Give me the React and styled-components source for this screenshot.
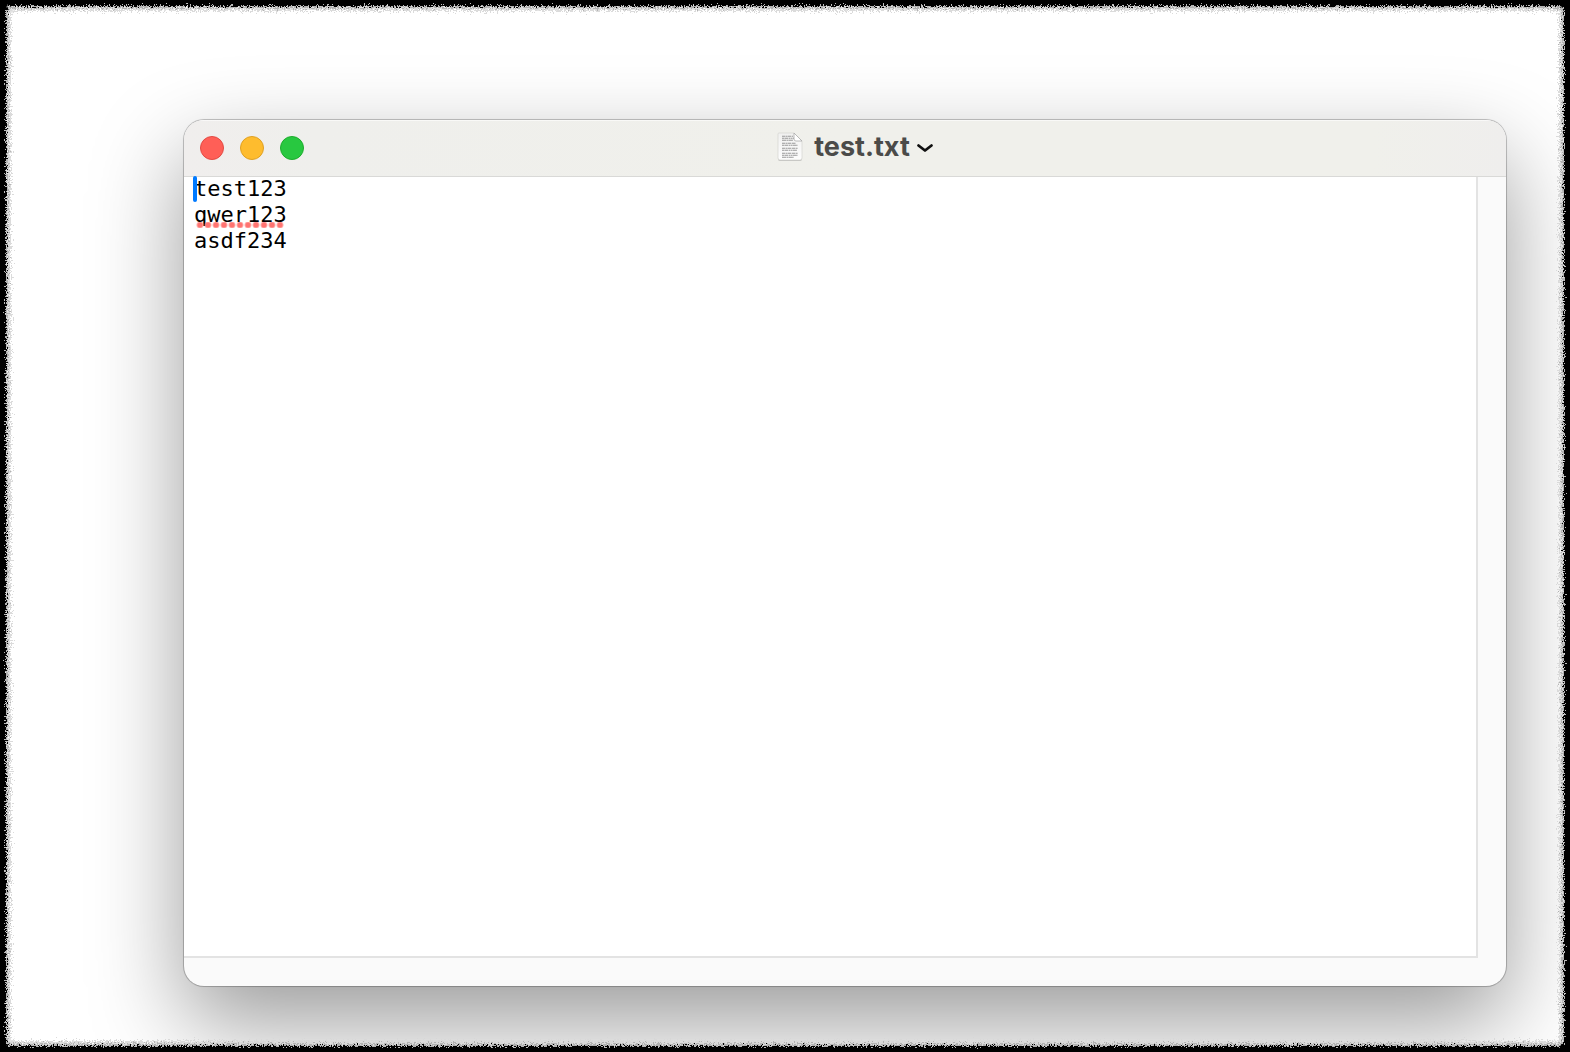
import { useState } from 'react';
import styled, { createGlobalStyle } from 'styled-components';

const GlobalStyle = createGlobalStyle`
  *, *::before, *::after {
    box-sizing: border-box;
  }

  body {
    margin: 0;
    background: #000;
  }
`;

const Desktop = styled.div`
  position: relative;
  display: flex;
  min-height: 100vh;
  padding: 120px 64px 66px 184px;
  background: #fff;
  overflow: hidden;
`;

/* Torn paper edge, drawn over the window's shadow */
const TornEdge = styled.div`
  position: absolute;
  inset: -24px;
  border: ${({ $width }) => $width}px solid ${({ $color }) => $color};
  filter: url(#${({ $filter }) => $filter});
  pointer-events: none;

  &::after {
    content: '';
    position: absolute;
    inset: -3px;
    border: 3px solid ${({ $color }) => $color};
    border-radius: 8px;
  }
`;

const FilterDefs = styled.svg`
  position: absolute;
  width: 0;
  height: 0;
`;

const Window = styled.main`
  flex: 1;
  display: flex;
  flex-direction: column;
  min-width: 0;
  border-radius: 20px;
  background: #fafafa;
  overflow: hidden;
  box-shadow:
    0 0 0 1px rgba(0, 0, 0, 0.18),
    0 0 2px rgba(0, 0, 0, 0.2),
    0 36px 92px rgba(0, 0, 0, 0.4);
`;

const TitleBar = styled.header`
  position: relative;
  z-index: 1;
  display: grid;
  grid-template-columns: 1fr auto 1fr;
  align-items: center;
  height: 56px;
  padding: 0 16px;
  background: linear-gradient(90deg, #f0eeed, #efefec 10%, #f0f0eb 50%, #f0f0eb 90%, #efeeed);
  box-shadow:
    inset 0 1px 0 rgba(255, 255, 255, 0.6),
    0 1px 0 #d9d9d7;
`;

const WindowControls = styled.div`
  display: flex;
  gap: 16px;
`;

const ControlButton = styled.button`
  width: 24px;
  height: 24px;
  padding: 0;
  border: 1px solid ${({ $edge }) => $edge};
  border-radius: 50%;
  background: ${({ $fill }) => $fill};
`;

const TitleButton = styled.button`
  display: flex;
  align-items: center;
  margin-left: 20px;
  padding: 0 0 2px;
  border: 0;
  background: none;
  color: #4b4b49;
  font-family: Inter, 'Liberation Sans', sans-serif;
  font-size: 27px;
  font-weight: 700;
  line-height: 32px;
`;

const FileName = styled.span`
  margin: 0 6px 0 10px;
`;

const EditorPane = styled.section`
  position: relative;
  flex: 1;
  display: flex;
  margin: 0 28px 28px 0;
  border: solid #e3e3e3;
  border-width: 0 2px 2px 0;
  background: #fff;
  font-family: 'DejaVu Sans Mono', 'Liberation Mono', monospace;
  font-size: 22px;
  line-height: 26px;
`;

const TextBox = styled.textarea`
  flex: 1;
  min-width: 0;
  padding: 0 10px;
  border: 0;
  outline: 0;
  resize: none;
  background: transparent;
  color: #000;
  font: inherit;
`;

const Caret = styled.span`
  position: absolute;
  z-index: 2;
  top: 0;
  left: 9px;
  width: 4px;
  height: 26px;
  border-radius: 2px;
  background: #007aff;
`;

const SpellingMark = styled.span`
  position: absolute;
  top: 46px;
  left: 12px;
  width: 88px;
  height: 6px;
  background: radial-gradient(circle at 4px 3px, #ff7370 2px, rgba(255, 115, 112, 0.6) 3px, transparent 4px) 0 0 / 8px 6px;
`;

const controls = [
  { label: 'Close', fill: '#ff5f57', edge: '#e24b44' },
  { label: 'Minimize', fill: '#febc2e', edge: '#dfa023' },
  { label: 'Zoom', fill: '#28c840', edge: '#1dad2c' },
];

function RoughFilter({ id, frequency, scale, seed }) {
  return (
    <filter id={id} x="0" y="0" width="100%" height="100%">
      <feTurbulence type="fractalNoise" baseFrequency={frequency} numOctaves="2" seed={seed} />
      <feDisplacementMap in="SourceGraphic" scale={scale} xChannelSelector="R" yChannelSelector="G" />
      <feGaussianBlur stdDeviation="0.4" />
    </filter>
  );
}

function DocumentIcon() {
  return (
    <svg width="28" height="32" viewBox="0 0 28 32" aria-hidden="true">
      <defs>
        <linearGradient id="paper" x1="0" y1="0" x2="0" y2="1">
          <stop offset="0" stopColor="#f1f1f0" />
          <stop offset="1" stopColor="#fdfdfd" />
        </linearGradient>
      </defs>
      <path d="M3 3h15l8 8v17q0 2-2 2H4q-2 0-2-2V4q0-1 1-1z" fill="#c2c2bf" />
      <path d="M3 2h15l8 8v17q0 2-2 2H4q-2 0-2-2V3q0-1 1-1z" fill="url(#paper)" stroke="#d4d4d0" strokeWidth=".7" />
      <g stroke="#999" strokeWidth="1.1">
        <path d="M6 5.2h11M6 12.2h14M6 17.2h16M6 22.2h16" strokeDasharray="3 .5 1.5 .4 4 .6" />
        <path d="M6 7.2h12M6 14.2h16M6 19.2h15M6 24.2h16" strokeDasharray="2 .4 4 .6 1 .5" />
        <path d="M6 9.2h11M6 26.2h12" strokeDasharray="4 .5 2 .4" />
      </g>
      <path d="M18 2v6q0 2 2 2h6z" fill="#fff" stroke="#aaa" strokeWidth=".8" />
    </svg>
  );
}

function Chevron() {
  return (
    <svg width="18" height="16" viewBox="0 0 18 16" aria-hidden="true">
      <path d="M2.5 6.5L9 11.5l6.5-5" fill="none" stroke="#111" strokeWidth="2.8" strokeLinecap="round" strokeLinejoin="round" />
    </svg>
  );
}

function App() {
  const [text, setText] = useState('test123\nqwer123\nasdf234');

  return (
    <>
      <GlobalStyle />
      <Desktop>
        <FilterDefs aria-hidden="true">
          <RoughFilter id="rough-soft" frequency="0.7" scale="12" seed="4" />
          <RoughFilter id="rough-mid" frequency="0.8" scale="12" seed="7" />
          <RoughFilter id="rough-hard" frequency="0.7" scale="9" seed="9" />
        </FilterDefs>

        <Window>
          <TitleBar>
            <WindowControls>
              {controls.map(({ label, fill, edge }) => (
                <ControlButton key={label} type="button" aria-label={label} $fill={fill} $edge={edge} />
              ))}
            </WindowControls>
            <TitleButton type="button">
              <DocumentIcon />
              <FileName>test.txt</FileName>
              <Chevron />
            </TitleButton>
          </TitleBar>
          <EditorPane>
            <TextBox
              aria-label="Document text"
              spellCheck={false}
              value={text}
              onChange={(event) => setText(event.target.value)}
            />
            <Caret />
            <SpellingMark />
          </EditorPane>
        </Window>

        <TornEdge $width={35} $color="rgba(215, 215, 215, 0.7)" $filter="rough-soft" />
        <TornEdge $width={32} $color="rgba(170, 170, 170, 0.6)" $filter="rough-mid" />
        <TornEdge $width={30} $color="#000" $filter="rough-hard" />
      </Desktop>
    </>
  );
}

export default App;
